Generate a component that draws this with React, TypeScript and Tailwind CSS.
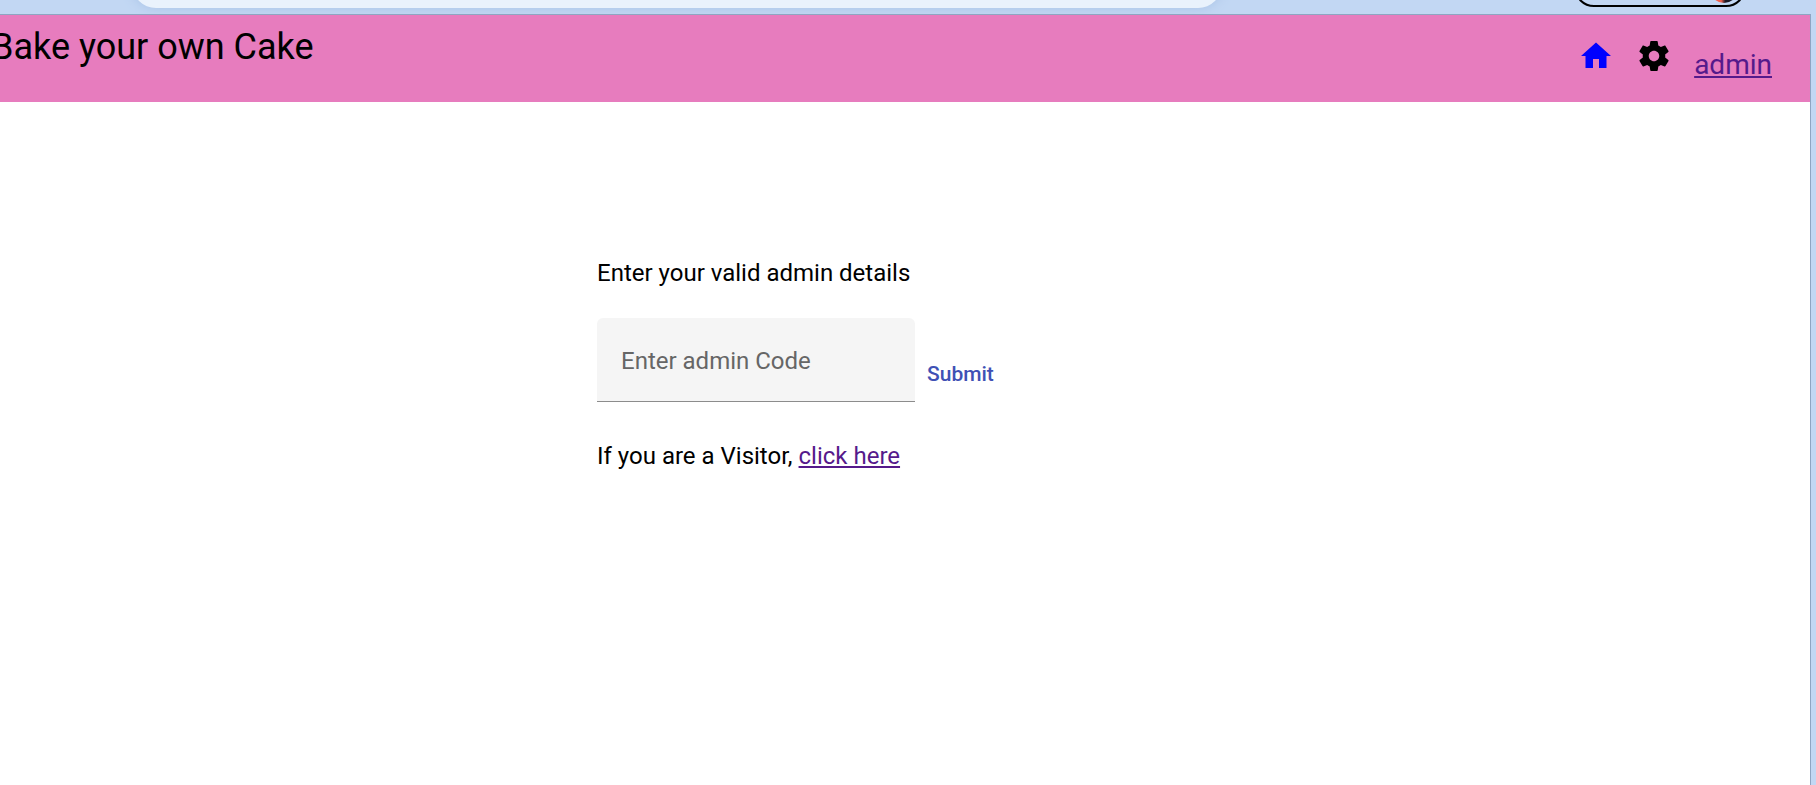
function HomeIcon() {
  return (
    <svg viewBox="0 0 24 24" className="size-9" fill="currentColor" aria-hidden="true">
      <path d="M10 20v-6h4v6h5v-8h3L12 3 2 12h3v8z" />
    </svg>
  );
}

function SettingsIcon() {
  return (
    <svg viewBox="0 0 24 24" className="size-9" fill="currentColor" aria-hidden="true">
      <path d="M19.43 12.98c.04-.32.07-.64.07-.98s-.03-.66-.07-.98l2.11-1.65c.19-.15.24-.42.12-.64l-2-3.46c-.12-.22-.39-.3-.61-.22l-2.49 1c-.52-.4-1.08-.73-1.69-.98l-.38-2.65C14.46 2.18 14.25 2 14 2h-4c-.25 0-.46.18-.49.42l-.38 2.65c-.61.25-1.17.59-1.69.98l-2.49-1c-.23-.09-.49 0-.61.22l-2 3.46c-.13.22-.07.49.12.64l2.11 1.65c-.04.32-.07.65-.07.98s.03.66.07.98l-2.11 1.65c-.19.15-.24.42-.12.64l2 3.46c.12.22.39.3.61.22l2.49-1c.52.4 1.08.73 1.69.98l.38 2.65c.03.24.24.42.49.42h4c.25 0 .46-.18.49-.42l.38-2.65c.61-.25 1.17-.59 1.69-.98l2.49 1c.23.09.49 0 .61-.22l2-3.46c.12-.22.07-.49-.12-.64l-2.11-1.65zM12 15.5c-1.93 0-3.5-1.57-3.5-3.5s1.57-3.5 3.5-3.5 3.5 1.57 3.5 3.5-1.57 3.5-3.5 3.5z" />
    </svg>
  );
}

function BrowserStrip() {
  return (
    <div className="flex h-3.5 items-start overflow-hidden">
      <div className="-mt-10 ml-[132px] h-12 w-[60%] rounded-3xl bg-[#e9f2fc] shadow-[0_0_12px_#a9c3e6]" />
      <div className="-mt-[33px] mr-[70px] ml-auto flex h-10 w-[172px] items-end justify-end rounded-[20px] border-2 border-black pr-1.5 pb-0.5">
        <div className="size-7 rounded-full bg-linear-to-r from-[#f0604c] from-40% to-[#1d1a26] to-55%" />
      </div>
    </div>
  );
}

export default function App() {
  return (
    <div className="flex min-h-screen flex-col overflow-hidden bg-[#c2d7f3] font-['Roboto',sans-serif] text-black">
      <BrowserStrip />
      <div className="mr-[5px] flex grow flex-col border-t border-r border-[#8fa5c2] bg-white">
        <header className="flex h-[87px] items-start justify-between bg-[#e77cbe] pr-[38px]">
          <h1 className="-ml-[9px] pt-2 text-[36px] leading-12">Bake your own Cake</h1>
          <nav className="flex items-start pt-[23px]">
            <a href="#home" aria-label="Home" className="mr-[22px] text-[#0000ff]">
              <HomeIcon />
            </a>
            <button type="button" aria-label="Settings" className="mr-[22px]">
              <SettingsIcon />
            </button>
            <a href="#admin" className="pt-[7px] text-[28px] leading-10 text-[#551a8b] underline">
              admin
            </a>
          </nav>
        </header>
        <main className="mx-auto w-[616px] max-w-full pt-[153px] text-[24px] leading-9">
          <label htmlFor="admin-code" className="block">
            Enter your valid admin details
          </label>
          <form className="mt-[27px] flex items-center gap-3" onSubmit={(e) => e.preventDefault()}>
            <input
              id="admin-code"
              type="text"
              placeholder="Enter admin Code"
              className="h-[84px] w-[318px] rounded-t-md border-b border-[#8c8c8c] bg-[#f5f5f5] px-6 pt-0.5 outline-none placeholder:text-[#666666]"
            />
            <button type="submit" className="pt-7 text-[21px] leading-9 font-medium text-[#3f51b5]">
              Submit
            </button>
          </form>
          <p className="mt-9">
            If you are a Visitor,{" "}
            <a href="#visitor" className="text-[#551a8b] underline">
              click here
            </a>
          </p>
        </main>
      </div>
    </div>
  );
}
